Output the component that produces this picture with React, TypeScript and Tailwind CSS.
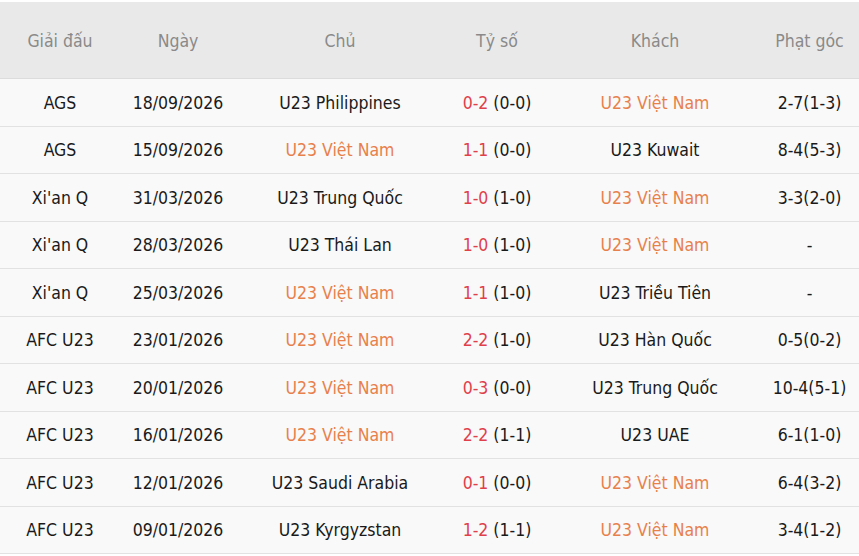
const rows = [
  { league: 'AGS', date: '18/09/2026', home: 'U23 Philippines', score: '0-2', half: '(0-0)', away: 'U23 Việt Nam', corner: '2-7(1-3)' },
  { league: 'AGS', date: '15/09/2026', home: 'U23 Việt Nam', score: '1-1', half: '(0-0)', away: 'U23 Kuwait', corner: '8-4(5-3)' },
  { league: "Xi'an Q", date: '31/03/2026', home: 'U23 Trung Quốc', score: '1-0', half: '(1-0)', away: 'U23 Việt Nam', corner: '3-3(2-0)' },
  { league: "Xi'an Q", date: '28/03/2026', home: 'U23 Thái Lan', score: '1-0', half: '(1-0)', away: 'U23 Việt Nam', corner: '-' },
  { league: "Xi'an Q", date: '25/03/2026', home: 'U23 Việt Nam', score: '1-1', half: '(1-0)', away: 'U23 Triều Tiên', corner: '-' },
  { league: 'AFC U23', date: '23/01/2026', home: 'U23 Việt Nam', score: '2-2', half: '(1-0)', away: 'U23 Hàn Quốc', corner: '0-5(0-2)' },
  { league: 'AFC U23', date: '20/01/2026', home: 'U23 Việt Nam', score: '0-3', half: '(0-0)', away: 'U23 Trung Quốc', corner: '10-4(5-1)' },
  { league: 'AFC U23', date: '16/01/2026', home: 'U23 Việt Nam', score: '2-2', half: '(1-1)', away: 'U23 UAE', corner: '6-1(1-0)' },
  { league: 'AFC U23', date: '12/01/2026', home: 'U23 Saudi Arabia', score: '0-1', half: '(0-0)', away: 'U23 Việt Nam', corner: '6-4(3-2)' },
  { league: 'AFC U23', date: '09/01/2026', home: 'U23 Kyrgyzstan', score: '1-2', half: '(1-1)', away: 'U23 Việt Nam', corner: '3-4(1-2)' },
];

const team = (name: string) =>
  name === 'U23 Việt Nam' ? 'text-[#e8804c]' : 'text-[#1a1a1a]';

export default function App() {
  return (
    <div className="w-[859px] h-[556px] bg-white pt-[2px] font-['Tahoma','DejaVu_Sans_Condensed',sans-serif] text-[17.5px]">
      <div className="flex h-[77px] pt-[2px] items-center bg-[#e9e9e9] text-[#8a8a8a] border-b border-[#dcdcdc]">
        <div className="w-[120px] text-center">Giải đấu</div>
        <div className="w-[116px] text-center">Ngày</div>
        <div className="w-[208px] text-center">Chủ</div>
        <div className="w-[106px] text-center">Tỷ số</div>
        <div className="w-[210px] text-center">Khách</div>
        <div className="w-[99px] text-center">Phạt góc</div>
      </div>
      {rows.map((r, i) => (
        <div key={i} className="flex h-[47.5px] pt-[1px] items-center bg-[#f9f9f9] border-b border-[#e2e2e2] text-[#1a1a1a]">
          <div className="w-[120px] text-center">{r.league}</div>
          <div className="w-[116px] text-center">{r.date}</div>
          <div className={`w-[208px] text-center ${team(r.home)}`}>{r.home}</div>
          <div className="w-[106px] text-center">
            <span className="text-[#e0404a]">{r.score}</span> {r.half}
          </div>
          <div className={`w-[210px] text-center ${team(r.away)}`}>{r.away}</div>
          <div className="w-[99px] text-center">{r.corner}</div>
        </div>
      ))}
    </div>
  );
}
